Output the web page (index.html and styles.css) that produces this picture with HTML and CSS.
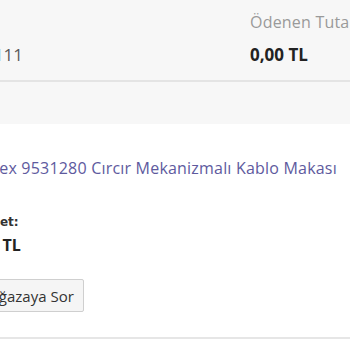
FILE: index.html
```html
<!DOCTYPE html>
<html lang="tr">
<head>
<meta charset="utf-8">
<link rel="stylesheet" href="styles.css">
</head>
<body>
<div class="summary">
  <div class="col col-left">
    <div class="label">No</div>
    <div class="value">2019111</div>
  </div>
  <div class="col col-right">
    <div class="label">Ödenen Tutar</div>
    <div class="value strong">0,00 TL</div>
  </div>
</div>
<div class="band"></div>
<div class="item">
  <div class="item-inner">
    <a class="product" href="#">Knipex 9531280 Cırcır Mekanizmalı Kablo Makası</a>
    <div class="meta">
      <div class="meta-label">Adet:</div>
      <div class="meta-value">10 TL</div>
    </div>
    <button class="ask">Mağazaya Sor</button>
  </div>
</div>
</body>
</html>
```
FILE: styles.css
```css
html, body {
  margin: 0;
  padding: 0;
  background: #ffffff;
  overflow: hidden;
  font-family: "Open Sans", "Noto Sans", sans-serif;
}
.summary {
  display: flex;
  background: #f7f7f7;
  height: 82px;
  border-bottom: 2px solid #e4e4e4;
  box-sizing: border-box;
}
.col {
  padding-top: 11px;
}
.col-left {
  margin-left: -45px;
  width: 295px;
  flex: none;
}
.col-right {
  flex: none;
  white-space: nowrap;
}
.label {
  font-size: 16px;
  color: #9a9a9a;
  line-height: 22px;
  letter-spacing: 0.2px;
}
.value {
  font-size: 17px;
  color: #5a5a5a;
  line-height: 24px;
  margin-top: 10px;
}
.value.strong {
  color: #222222;
  font-weight: 700;
}
.band {
  height: 42px;
  background: #f7f7f7;
}
.item {
  padding-top: 34px;
  border-bottom: 2px solid #e6e6e6;
  height: 215px;
  box-sizing: border-box;
}
.item-inner {
  margin-left: -35px;
}
.product {
  display: block;
  font-size: 16px;
  letter-spacing: 0.2px;
  line-height: 20px;
  color: #5e5a9e;
  text-decoration: none;
  white-space: nowrap;
}
.meta {
  margin-top: 35px;
  padding-left: 17px;
}
.meta-label {
  font-family: "DejaVu Sans", sans-serif;
  font-size: 12px;
  font-weight: 700;
  color: #333333;
  line-height: 18px;
}
.meta-value {
  font-size: 16px;
  font-weight: 700;
  color: #222222;
  line-height: 20px;
  margin-top: 4px;
  margin-left: -2px;
}
.ask {
  display: block;
  margin-top: 24px;
  font-family: "Open Sans", sans-serif;
  font-size: 15px;
  color: #333333;
  background: #f5f5f5;
  border: 1px solid #cfcfcf;
  border-radius: 2px;
  height: 33px;
  padding: 0 9px 0 11px;
}
```
